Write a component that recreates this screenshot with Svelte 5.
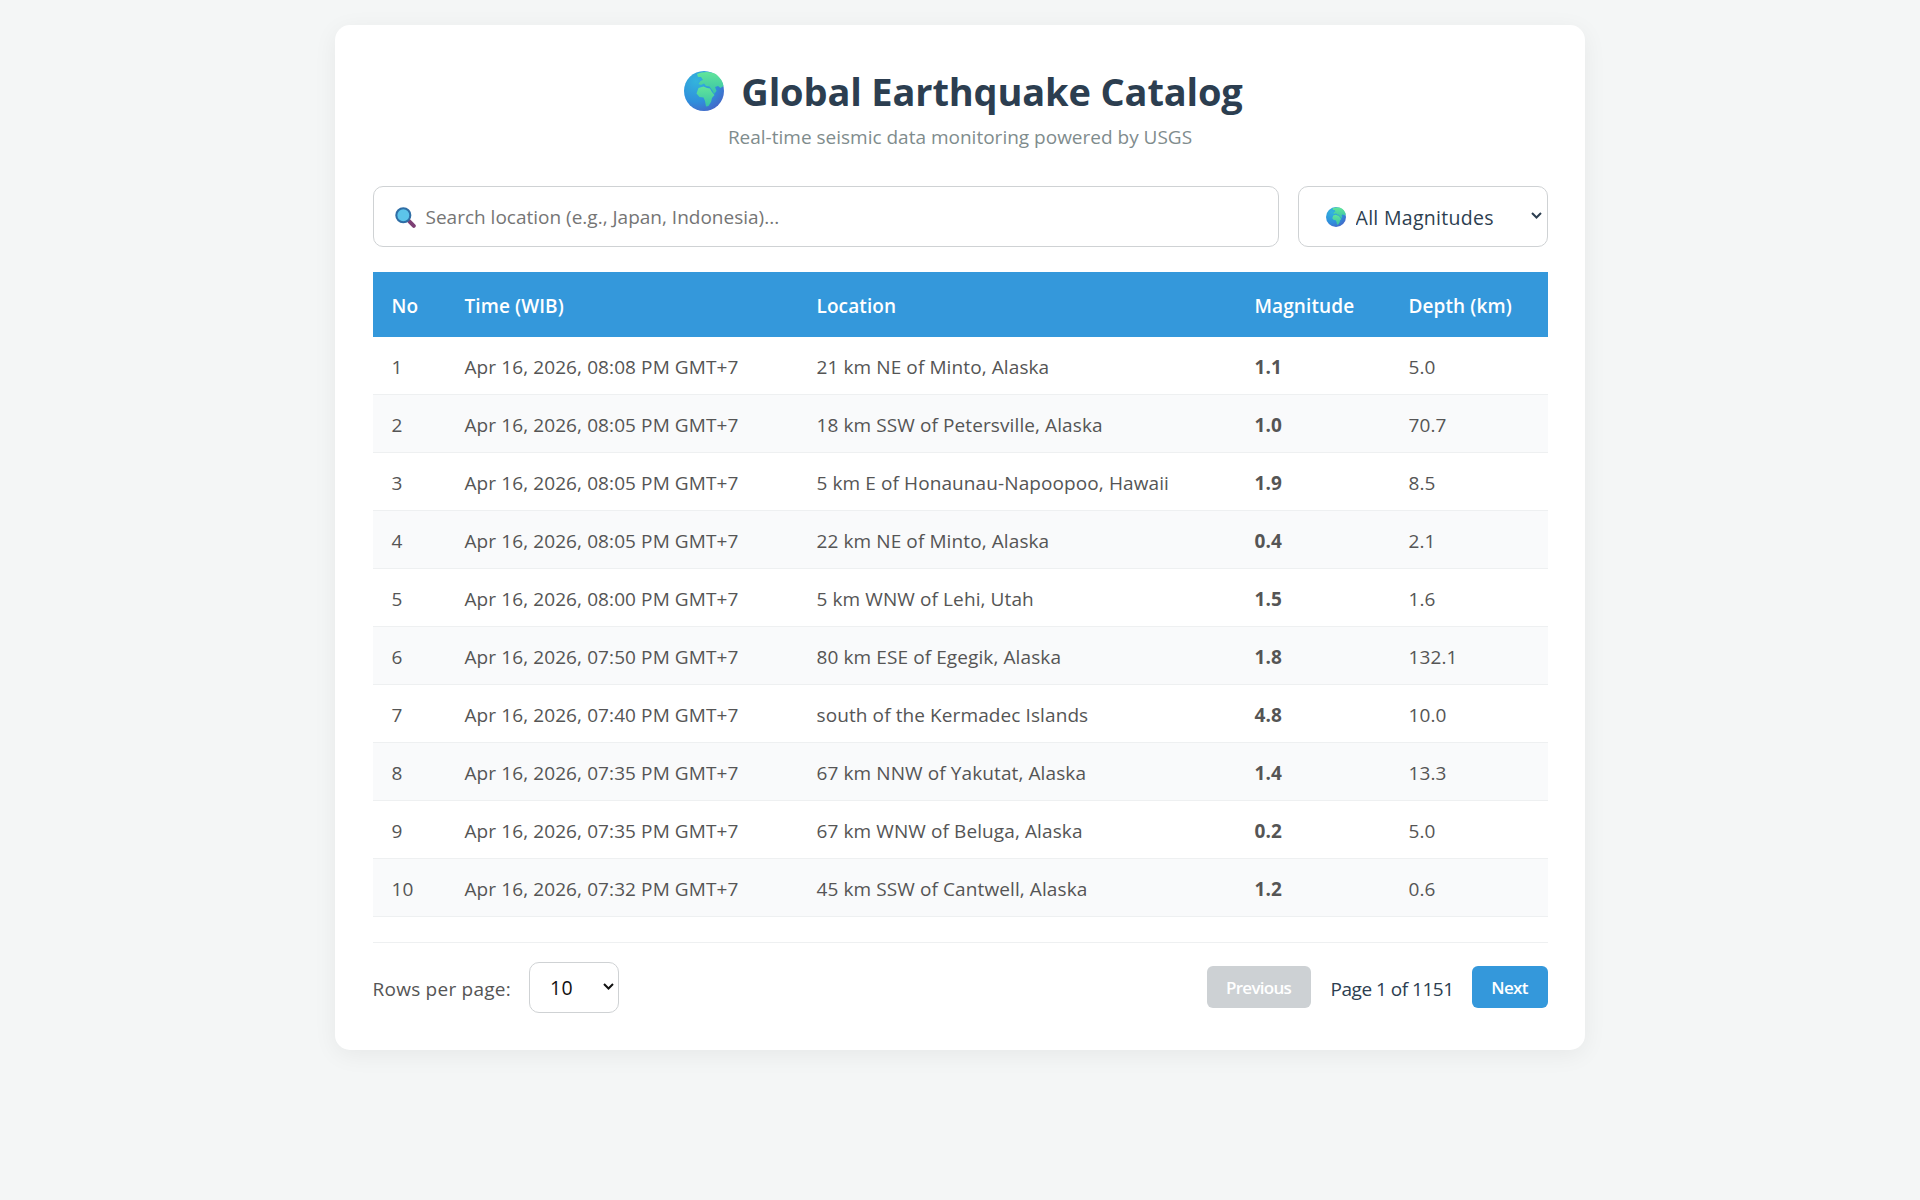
<script>
  const rows = [
    ['1', 'Apr 16, 2026, 08:08 PM GMT+7', '21 km NE of Minto, Alaska', '1.1', '5.0'],
    ['2', 'Apr 16, 2026, 08:05 PM GMT+7', '18 km SSW of Petersville, Alaska', '1.0', '70.7'],
    ['3', 'Apr 16, 2026, 08:05 PM GMT+7', '5 km E of Honaunau-Napoopoo, Hawaii', '1.9', '8.5'],
    ['4', 'Apr 16, 2026, 08:05 PM GMT+7', '22 km NE of Minto, Alaska', '0.4', '2.1'],
    ['5', 'Apr 16, 2026, 08:00 PM GMT+7', '5 km WNW of Lehi, Utah', '1.5', '1.6'],
    ['6', 'Apr 16, 2026, 07:50 PM GMT+7', '80 km ESE of Egegik, Alaska', '1.8', '132.1'],
    ['7', 'Apr 16, 2026, 07:40 PM GMT+7', 'south of the Kermadec Islands', '4.8', '10.0'],
    ['8', 'Apr 16, 2026, 07:35 PM GMT+7', '67 km NNW of Yakutat, Alaska', '1.4', '13.3'],
    ['9', 'Apr 16, 2026, 07:35 PM GMT+7', '67 km WNW of Beluga, Alaska', '0.2', '5.0'],
    ['10', 'Apr 16, 2026, 07:32 PM GMT+7', '45 km SSW of Cantwell, Alaska', '1.2', '0.6']
  ];
</script>

{#snippet globe(cls, id)}
  <svg class={cls} viewBox="0 0 40 40" aria-hidden="true">
    <defs>
      <radialGradient id={id} cx="0.3" cy="0.25" r="0.95">
        <stop offset="0" stop-color="#33b4dc" />
        <stop offset="0.55" stop-color="#2f8fdc" />
        <stop offset="1" stop-color="#4c58c0" />
      </radialGradient>
      <linearGradient id={id + 'l'} x1="0" y1="0" x2="0" y2="1">
        <stop offset="0" stop-color="#62e59a" />
        <stop offset="1" stop-color="#38c2a8" />
      </linearGradient>
    </defs>
    <circle cx="20" cy="20" r="20" fill={`url(#${id})`} />
    <path fill={`url(#${id}l)`} d="M13 3C18 .5 28 0 33 4c4 3.500 6 7 6.500 11l-3 2-2.500-2-3 1 1.500 4-2.500 3-2-4-2.500-3.500-3.500-.5-2-2.500-3 1.500-2.500-1 2-3 2.500-1-2-3h-3z" />
    <path fill={`url(#${id}l)`} d="M14.500 17l5-1.500 3.500 1.500 3 .5 2 3.500 2.500 3-2.500 3-1 4-2.500 4-2.500.5-1-5.500-1.500-3.500-4-.5-3-3.500z" />
  </svg>
{/snippet}

{#snippet chevron(cls)}
  <svg class={cls} viewBox="0 0 11 7" aria-hidden="true">
    <path d="M1 1l4.500 4.500L10 1" fill="none" stroke="currentColor" stroke-width="2" />
  </svg>
{/snippet}

<main class="card">
  <header class="head">
    <h1>{@render globe('g-title', 'gt')}<span>Global Earthquake Catalog</span></h1>
    <p>Real-time seismic data monitoring powered by USGS</p>
  </header>

  <div class="filters">
    <div class="search">
      <svg class="lens" viewBox="0 0 24 24" aria-hidden="true">
        <path d="M15 15l6.500 6.500" stroke="#7d3f74" stroke-width="4.500" stroke-linecap="round" />
        <circle cx="9.500" cy="9.500" r="8" fill="#5cc4ea" stroke="#2f6ea6" stroke-width="2.400" />
      </svg>
      <input type="text" placeholder="Search location (e.g., Japan, Indonesia)..." />
    </div>
    <div class="mag">
      {@render globe('g-sel', 'gs')}
      <select>
        <option>All Magnitudes</option>
      </select>
      {@render chevron('chev')}
    </div>
  </div>

  <table>
    <thead>
      <tr>
        <th class="c1">No</th>
        <th class="c2">Time (WIB)</th>
        <th class="c3">Location</th>
        <th class="c4">Magnitude</th>
        <th class="c5">Depth (km)</th>
      </tr>
    </thead>
    <tbody>
      {#each rows as r}
        <tr>
          <td>{r[0]}</td>
          <td>{r[1]}</td>
          <td>{r[2]}</td>
          <td class="strong">{r[3]}</td>
          <td>{r[4]}</td>
        </tr>
      {/each}
    </tbody>
  </table>

  <footer class="foot">
    <div class="per">
      <label for="rows">Rows per page:</label>
      <div class="rowsel">
        <select id="rows"><option>10</option></select>
        {@render chevron('chev dark')}
      </div>
    </div>
    <div class="pager">
      <button class="prev" disabled>Previous</button>
      <span class="info">Page 1 of 1151</span>
      <button class="next">Next</button>
    </div>
  </footer>
</main>

<style>
  :global(body) {
    margin: 0;
    background: #f4f6f6;
    font-family: "Open Sans", "Noto Sans", sans-serif;
    color: #2c3e50;
  }
  :global(#app) {
    display: flow-root;
    min-height: 1200px;
  }
  .card {
    width: 1250px;
    box-sizing: border-box;
    margin: 25px auto 0;
    padding: 37.5px;
    background: #fff;
    border-radius: 15px;
    box-shadow: 0 5px 25px rgba(0, 0, 0, 0.06);
  }
  .head {
    text-align: center;
    margin-bottom: 36px;
  }
  h1 {
    margin: 2px 0 0;
    padding-left: 7px;
    display: flex;
    justify-content: center;
    align-items: center;
    gap: 17px;
    font-size: 38px;
    line-height: 52px;
    font-weight: 700;
    letter-spacing: -0.15px;
    color: #2c3e50;
  }
  .g-title {
    width: 40px;
    height: 40px;
  }
  .head p {
    margin: 7px 0 0;
    font-size: 19px;
    line-height: 26px;
    letter-spacing: 0;
    color: #7f8c8d;
  }
  .filters {
    display: flex;
    gap: 19px;
    margin-bottom: 25px;
  }
  .search {
    position: relative;
    flex: 1;
  }
  .lens {
    position: absolute;
    left: 22px;
    top: 21px;
    width: 21px;
    height: 21px;
  }
  input {
    width: 100%;
    height: 61px;
    box-sizing: border-box;
    padding: 2px 20px 0 52px;
    border: 1.25px solid #cfd2d4;
    border-radius: 10px;
    font: inherit;
    font-size: 19px;
    letter-spacing: 0;
    color: #2c3e50;
    outline: none;
  }
  input::placeholder {
    color: #757575;
    opacity: 1;
  }
  .mag {
    position: relative;
    width: 250px;
    color: #2c3e50;
  }
  .g-sel {
    position: absolute;
    left: 28px;
    top: 21px;
    width: 20px;
    height: 20px;
    pointer-events: none;
  }
  .chev {
    position: absolute;
    right: 5.500px;
    top: 50%;
    margin-top: -4px;
    width: 11px;
    height: 7px;
    pointer-events: none;
  }
  .chev.dark {
    color: #111;
  }
  select {
    appearance: none;
    box-sizing: border-box;
    display: block;
    font: inherit;
    background: #fff;
    border: 1.25px solid #cfd2d4;
    border-radius: 10px;
    font-size: 19.5px;
    letter-spacing: 0.3px;
    color: #2c3e50;
    outline: none;
  }
  .mag select {
    width: 100%;
    height: 61px;
    padding: 2px 0 0 57px;
    font-weight: 500;
  }
  table {
    width: 100%;
    border-collapse: collapse;
    table-layout: fixed;
    font-size: 19px;
    letter-spacing: 0.1px;
    color: #555;
  }
  th {
    box-sizing: border-box;
    height: 65px;
    padding: 4px 19px 0;
    background: #3498db;
    color: #fff;
    text-align: left;
    font-weight: 600;
    white-space: nowrap;
  }
  .c1 { width: 73px; }
  .c2 { width: 352px; }
  .c3 { width: 438px; }
  .c4 { width: 154px; }
  td {
    box-sizing: border-box;
    height: 58px;
    padding: 3px 19px 0;
    border-bottom: 1px solid #eef0f1;
    white-space: nowrap;
  }
  tbody tr:nth-child(even) {
    background: #f9fafb;
  }
  .strong {
    font-weight: 700;
  }
  .foot {
    display: flex;
    justify-content: space-between;
    align-items: center;
    margin-top: 25px;
    padding-top: 18.5px;
    border-top: 1px solid #eef0f1;
  }
  .per {
    display: flex;
    align-items: center;
    gap: 18px;
    font-size: 19px;
    letter-spacing: 0.25px;
    color: #555;
    font-weight: 500;
  }
  label {
    padding-top: 3px;
  }
  .rowsel {
    position: relative;
  }
  .per select {
    width: 90px;
    height: 51px;
    padding: 0 0 0 20px;
    color: #111;
  }
  .pager {
    display: flex;
    align-items: center;
    gap: 20px;
    font-size: 19px;
    letter-spacing: -0.5px;
    color: #2c3e50;
    font-weight: 500;
  }
  .info {
    padding-top: 3px;
    margin-right: -2px;
  }
  button {
    box-sizing: border-box;
    height: 42px;
    padding: 0;
    border: none;
    border-radius: 6px;
    background: #3498db;
    color: #fff;
    font: inherit;
    font-size: 17px;
    font-weight: 600;
    letter-spacing: -0.7px;
  }
  .prev {
    width: 104px;
  }
  .next {
    width: 76px;
  }
  button:disabled {
    background: #cdd1d4;
  }
</style>
